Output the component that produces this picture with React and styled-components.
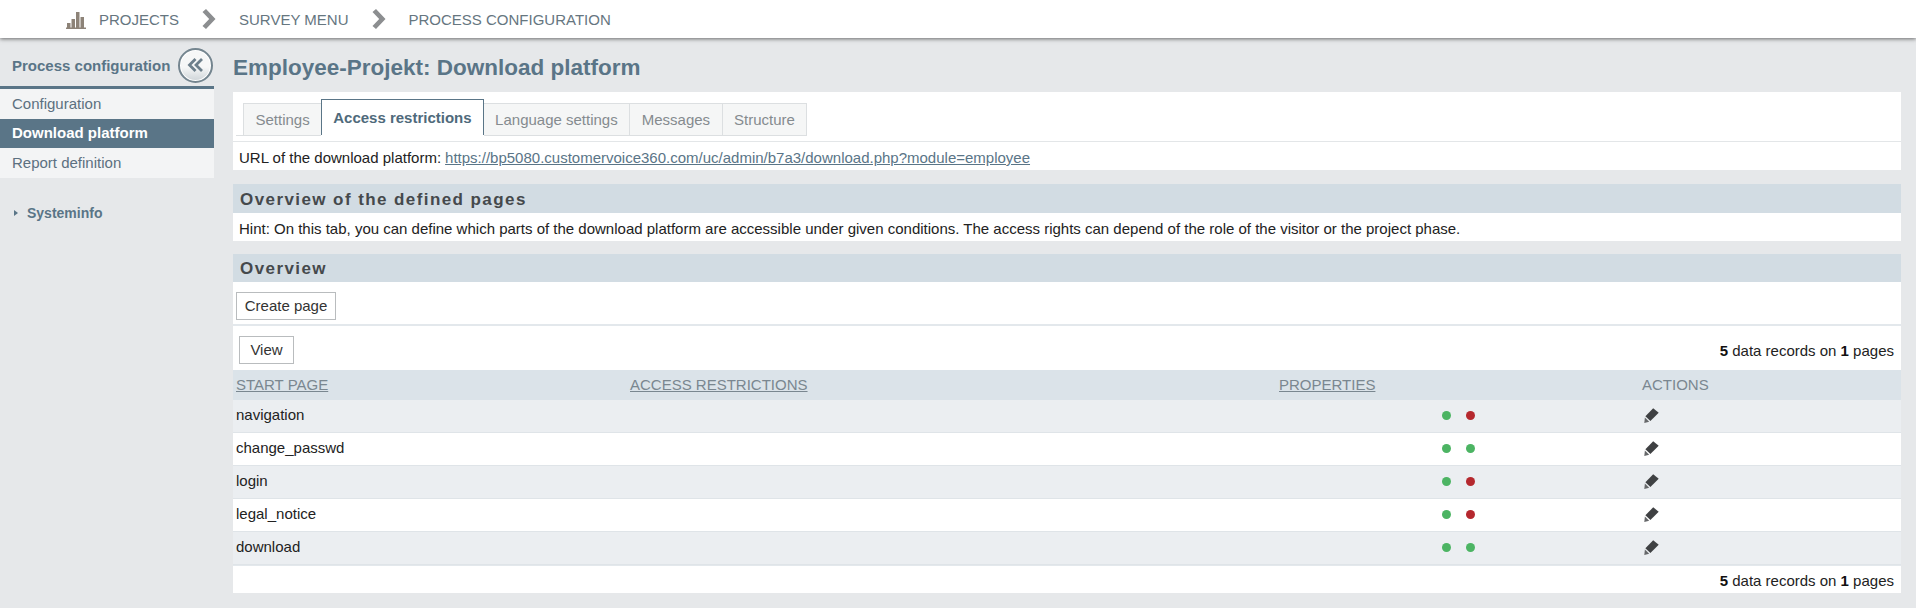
import React from "react";
import styled, { createGlobalStyle } from "styled-components";

const Global = createGlobalStyle`
  html, body { margin: 0; padding: 0; background: #e6e8ea; }
  body { font-family: "Liberation Sans", Arial, sans-serif; font-size: 15px; color: #222; }
`;

const Page = styled.div`
  width: 1916px;
  height: 608px;
  overflow: hidden;
  display: flex;
  flex-direction: column;
`;

const TopBar = styled.header`
  height: 38px;
  flex: none;
  background: #fff;
  box-shadow: 0 1px 4px rgba(0, 0, 0, 0.55);
  display: flex;
  align-items: center;
  padding-left: 66px;
  position: relative;
  z-index: 2;
`;

const Crumb = styled.span`
  font-size: 15px;
  color: #66767f;
  margin-left: ${(p) => p.$ml}px;
`;

const Chevron = styled.svg`
  width: 14px;
  height: 20px;
  margin-left: 23px;
  flex: none;
`;

const BarsIcon = styled.svg`
  width: 21px;
  height: 19px;
  flex: none;
`;

const Body = styled.div`
  flex: 1;
  display: flex;
`;

const Side = styled.aside`
  width: 214px;
  flex: none;
  margin-right: 19px;
`;

const SideHead = styled.div`
  height: 42px;
  box-sizing: content-box;
  border-bottom: 3px solid #5a7587;
  display: flex;
  align-items: center;
  justify-content: space-between;
  padding: 6px 1px 0 12px;
  font-weight: bold;
  font-size: 15px;
  color: #5a7587;
`;

const Collapse = styled.span`
  width: 35px;
  height: 35px;
  box-sizing: border-box;
  border-radius: 50%;
  border: 2px solid #74858f;
  background: linear-gradient(#f6f7f7 55%, #ced4d8);
  box-shadow: 0 0 0 1px #fff inset;
  display: flex;
  align-items: center;
  justify-content: center;
`;

const SideItem = styled.div`
  height: ${(p) => p.$h || 30}px;
  box-sizing: border-box;
  display: flex;
  align-items: center;
  padding: 0 0 2px 12px;
  font-size: 15px;
  background: ${(p) => (p.$active ? "#5a7587" : "#f3f4f5")};
  color: ${(p) => (p.$active ? "#fff" : "#5c7080")};
  font-weight: ${(p) => (p.$active ? "bold" : "normal")};
`;

const SysInfo = styled.div`
  margin-top: 27px;
  padding-left: 14px;
  display: flex;
  align-items: center;
  gap: 9px;
  font-size: 14px;
  font-weight: bold;
  color: #5a7587;
  height: 16px;
`;

const Tri = styled.span`
  width: 0;
  height: 0;
  border-left: 4px solid #5a7587;
  border-top: 3px solid transparent;
  border-bottom: 3px solid transparent;
`;

const Main = styled.main`
  width: 1668px;
  flex: none;
`;

const Title = styled.h1`
  margin: 0;
  height: 54px;
  line-height: 60px;
  font-size: 22.5px;
  font-weight: bold;
  color: #5a7587;
`;

const Panel = styled.div`
  background: #fff;
`;

const TabBar = styled.div`
  height: 50px;
  box-sizing: border-box;
  padding: 7px 0 0 3px;
  border-bottom: 1px solid #e3e6e8;
  display: flex;
  align-items: flex-start;
`;

const TabStrip = styled.div`
  display: flex;
  align-items: flex-end;
  height: 36px;
  padding-left: 7px;
  box-sizing: content-box;
  box-shadow: 0 1px 0 #dcdfe1;
`;

const Tab = styled.div`
  box-sizing: border-box;
  height: ${(p) => (p.$active ? 36 : 32)}px;
  padding: 0 ${(p) => (p.$active ? 11 : 11.5)}px 1px;
  display: flex;
  align-items: center;
  font-size: 15px;
  font-weight: ${(p) => (p.$active ? "bold" : "normal")};
  color: ${(p) => (p.$active ? "#4f6a7b" : "#858b8f")};
  background: ${(p) => (p.$active ? "#fff" : "#f5f6f6")};
  border: 1px solid ${(p) => (p.$active ? "#5a7587" : "#dcdfe1")};
  border-bottom: none;
  margin-left: ${(p) => (p.$first ? 0 : -1)}px;
  position: relative;
  z-index: ${(p) => (p.$active ? 1 : 0)};
  ${(p) => p.$active && "box-shadow: 0 1px 0 #fff;"}
`;

const UrlRow = styled.div`
  height: 28px;
  box-sizing: border-box;
  padding: 3px 0 0 6px;
  display: flex;
  align-items: center;
  font-size: 15px;
  color: #222;
`;

const Link = styled.a`
  color: #5a7587;
  text-decoration: underline;
  margin-left: 4px;
`;

const SectionHead = styled.h2`
  margin: ${(p) => p.$mt}px 0 0;
  height: ${(p) => p.$h}px;
  box-sizing: border-box;
  display: flex;
  align-items: center;
  padding: 2px 0 0 7px;
  background: #d2dce3;
  color: #45494c;
  font-size: 17px;
  font-weight: bold;
  letter-spacing: 1.42px;
`;

const HintRow = styled.div`
  height: 28px;
  box-sizing: border-box;
  background: #fff;
  display: flex;
  align-items: center;
  padding: 2px 0 0 6px;
  font-size: 15px;
  color: #222;
`;

const CreateRow = styled.div`
  height: 44px;
  box-sizing: border-box;
  padding: 10px 0 0 3px;
  border-bottom: 2px solid #e3e8ec;
`;

const Btn = styled.button`
  box-sizing: border-box;
  height: 28px;
  padding: 0 0 2px;
  width: ${(p) => p.$w}px;
  background: #fff;
  border: 1px solid #b9bcbe;
  font: 15px "Liberation Sans", Arial, sans-serif;
  color: #333;
`;

const ViewRow = styled.div`
  height: 44px;
  box-sizing: border-box;
  padding: 10px 7px 6px 6px;
  display: flex;
  align-items: center;
  justify-content: space-between;
`;

const Count = styled.span`
  font-size: 15px;
  color: #222;
  b { color: #111; }
`;

const Row = styled.div`
  display: grid;
  grid-template-columns: 394px 649px 363px 1fr;
  padding-left: 3px;
  align-items: center;
  box-sizing: border-box;
`;

const HeadRow = styled(Row)`
  height: 30px;
  padding-bottom: 2px;
  background: #dbe3e9;
  font-size: 15px;
  color: #7a8790;
`;

const SortLink = styled.span`
  text-decoration: underline;
  justify-self: start;
`;

const DataRow = styled(Row)`
  height: 33px;
  padding-bottom: 1px;
  background: ${(p) => (p.$alt ? "#ebeef1" : "#fff")};
  border-bottom: 1px solid #dfe4e8;
  font-size: 15px;
  color: #222;
`;

const PageName = styled.span`
  padding-bottom: 2px;
`;

const Dots = styled.div`
  display: flex;
  gap: 15px;
  padding-left: 163px;
`;

const Dot = styled.span`
  width: 9px;
  height: 9px;
  border-radius: 50%;
  background: ${(p) => (p.$on ? "#4cb463" : "#b5282e")};
`;

const Pencil = styled.svg`
  width: 15px;
  height: 15px;
  margin-left: 2px;
  display: block;
`;

const FootRow = styled.div`
  height: 28px;
  box-sizing: border-box;
  border-top: 1px solid #e3e8ec;
  background: #fff;
  display: flex;
  align-items: center;
  justify-content: flex-end;
  padding: 1px 7px 0 0;
`;

const rows = [
  ["navigation", false],
  ["change_passwd", true],
  ["login", false],
  ["legal_notice", false],
  ["download", true],
];

const Arrow = () => (
  <Chevron viewBox="0 0 14 20">
    <path d="M0.500 3 L4 0 L13.500 10 L4 20 L0.500 17 L7.200 10 Z" fill="#8c8e90" />
  </Chevron>
);

const PencilIcon = () => (
  <Pencil viewBox="0 0 15 15">
    <path d="M9.200 0.300 L14.700 4.700 L6.400 13 L1.400 8.300 Z" fill="#3f4143" />
    <path d="M0.900 9.600 L5.200 13.700 L0.300 14.900 Z" fill="#66686a" />
  </Pencil>
);

const Count5 = () => (
  <Count>
    <b>5</b> data records on <b>1</b> pages
  </Count>
);

export default function App() {
  return (
    <Page>
      <Global />
      <TopBar>
        <BarsIcon viewBox="0 0 21 19">
          <path d="M0 17.500h20v1.500H0z M1 13h3.500v5H1z M5.500 9h3.500v9h-3.500z M10 2h3.500v16H10z M14.500 7h3.500v11h-3.500z" fill="#8d8378" />
        </BarsIcon>
        <Crumb $ml={12}>PROJECTS</Crumb>
        <Arrow />
        <Crumb $ml={23}>SURVEY MENU</Crumb>
        <Arrow />
        <Crumb $ml={23}>PROCESS CONFIGURATION</Crumb>
      </TopBar>
      <Body>
        <Side>
          <SideHead>
            Process configuration
            <Collapse>
              <svg width="18" height="16" viewBox="0 0 18 16">
                <path d="M8.500 2 L2.500 8 L8.500 14 M15 2 L9 8 L15 14" fill="none" stroke="#6d7f8b" strokeWidth="2.800" />
              </svg>
            </Collapse>
          </SideHead>
          <SideItem>Configuration</SideItem>
          <SideItem $active $h={29}>Download platform</SideItem>
          <SideItem>Report definition</SideItem>
          <SysInfo>
            <Tri />
            Systeminfo
          </SysInfo>
        </Side>
        <Main>
          <Title>Employee-Projekt: Download platform</Title>
          <Panel>
            <TabBar>
              <TabStrip>
                <Tab $first>Settings</Tab>
                <Tab $active>Access restrictions</Tab>
                <Tab>Language settings</Tab>
                <Tab>Messages</Tab>
                <Tab>Structure</Tab>
              </TabStrip>
            </TabBar>
            <UrlRow>
              URL of the download platform:
              <Link>https://bp5080.customervoice360.com/uc/admin/b7a3/download.php?module=employee</Link>
            </UrlRow>
          </Panel>
          <SectionHead $mt={14} $h={29}>Overview of the defined pages</SectionHead>
          <HintRow>
            Hint: On this tab, you can define which parts of the download platform are accessible under given conditions. The access rights can depend of the role of the visitor or the project phase.
          </HintRow>
          <SectionHead $mt={13} $h={28}>Overview</SectionHead>
          <Panel>
            <CreateRow>
              <Btn $w={100}>Create page</Btn>
            </CreateRow>
            <ViewRow>
              <Btn $w={55}>View</Btn>
              <Count5 />
            </ViewRow>
            <HeadRow>
              <SortLink>START PAGE</SortLink>
              <SortLink>ACCESS RESTRICTIONS</SortLink>
              <SortLink>PROPERTIES</SortLink>
              <span>ACTIONS</span>
            </HeadRow>
            {rows.map(([name, second], i) => (
              <DataRow key={name} $alt={i % 2 === 0}>
                <PageName>{name}</PageName>
                <span />
                <Dots>
                  <Dot $on />
                  <Dot $on={second} />
                </Dots>
                <PencilIcon />
              </DataRow>
            ))}
            <FootRow>
              <Count5 />
            </FootRow>
          </Panel>
        </Main>
      </Body>
    </Page>
  );
}
